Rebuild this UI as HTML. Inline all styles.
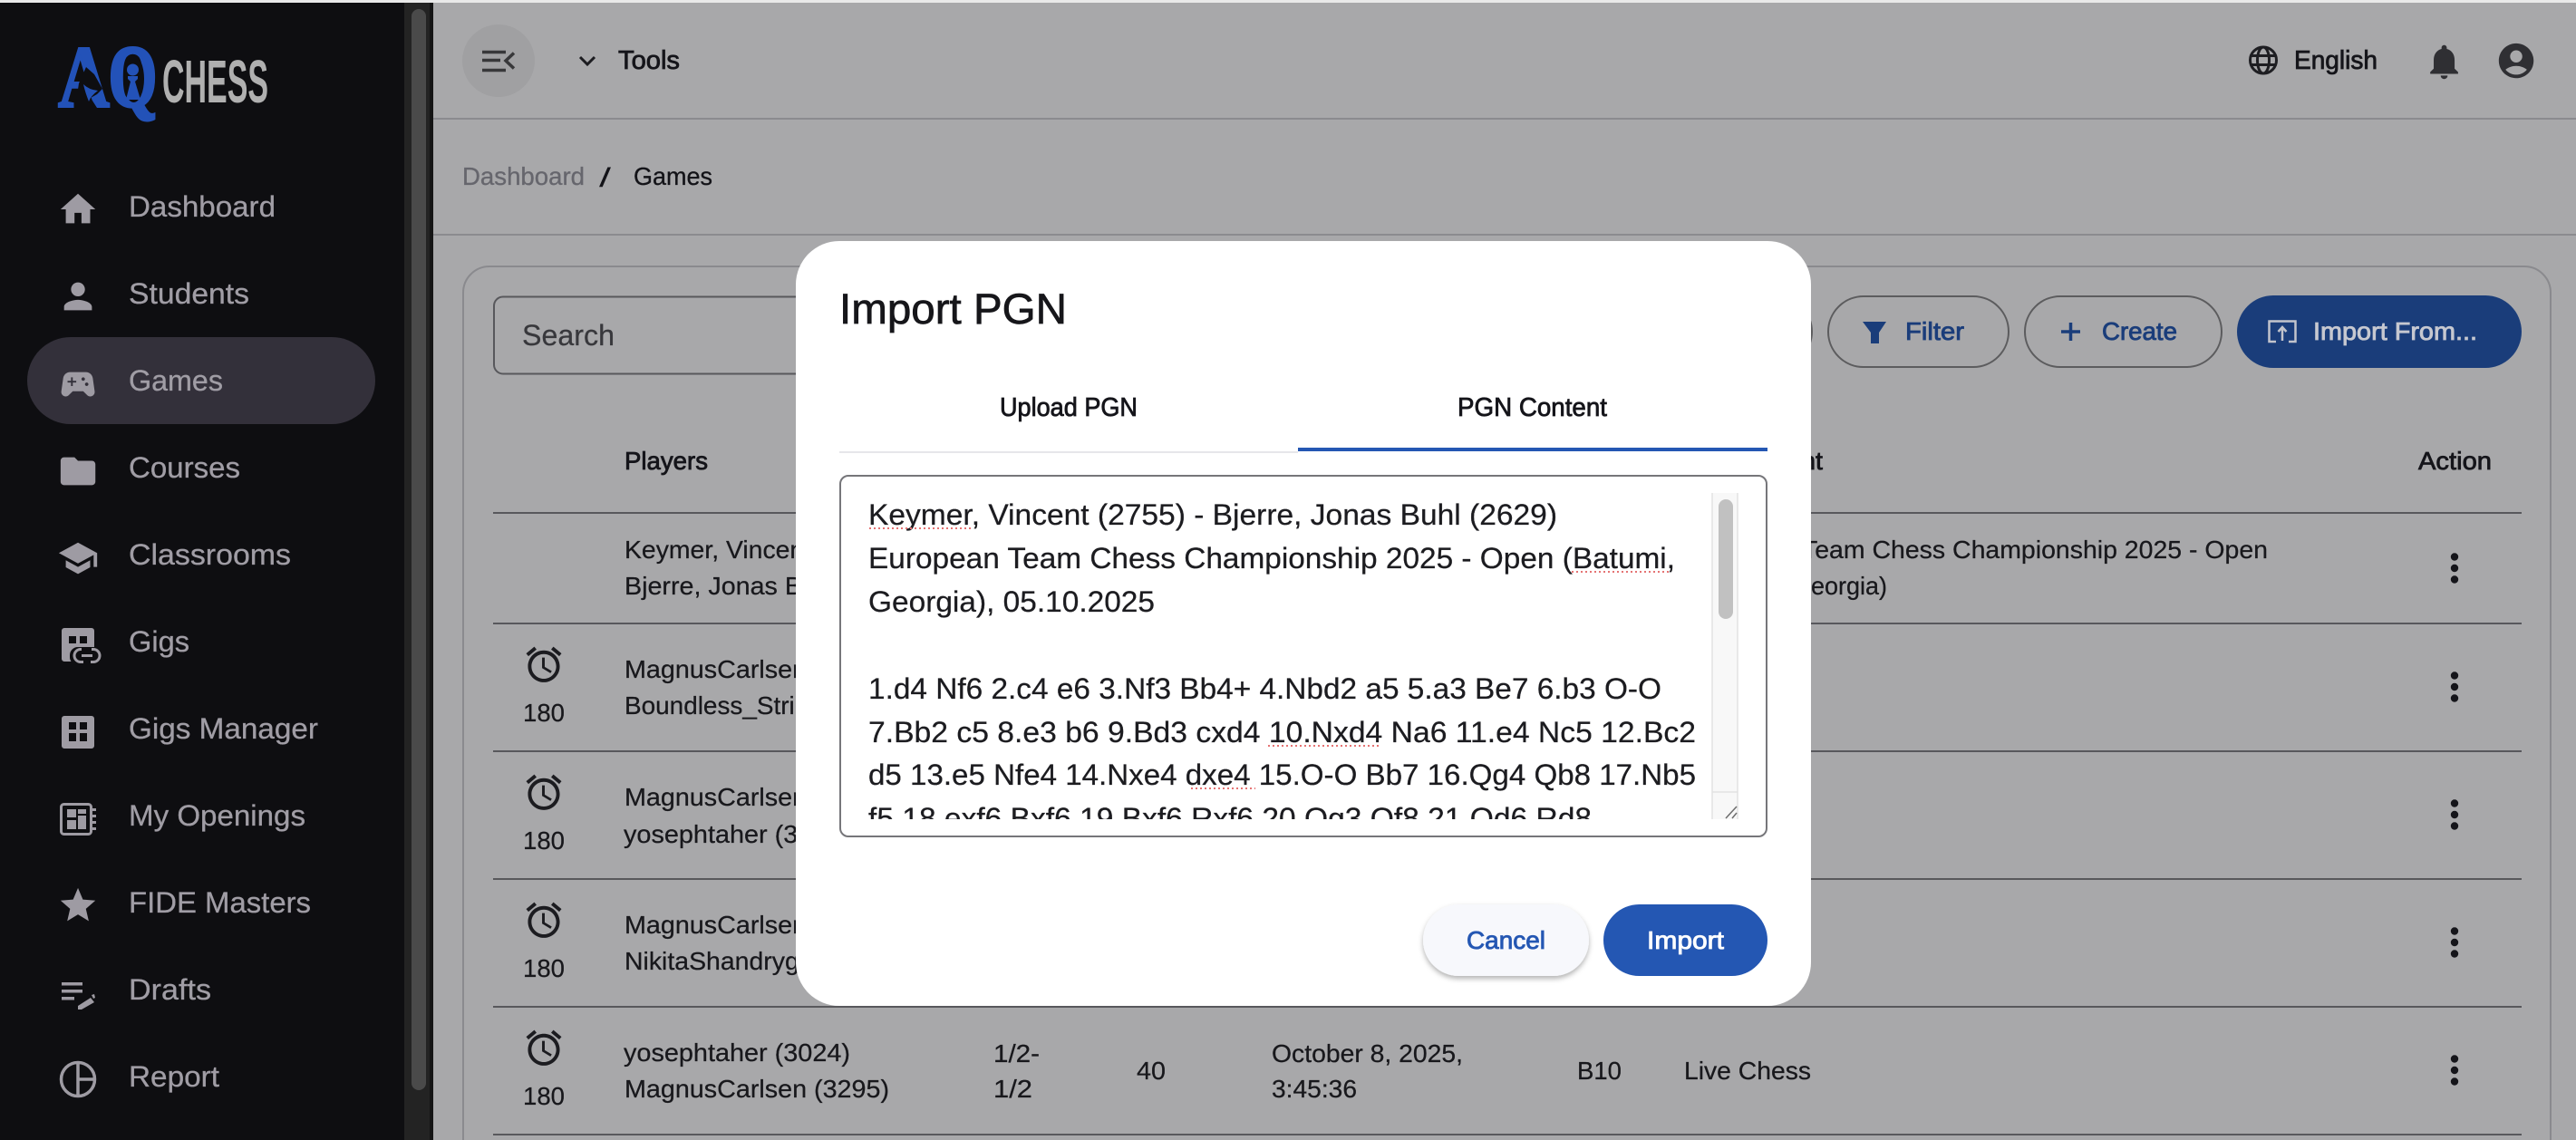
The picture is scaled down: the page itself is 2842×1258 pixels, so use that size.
<!DOCTYPE html>
<html lang="en"><head><meta charset="utf-8"><title>Import PGN</title>
<style>
html,body{margin:0;padding:0;width:2842px;height:1258px;overflow:hidden;background:#a8a8aa}
svg{display:block;position:absolute;left:0;top:0}
text{font-family:"Liberation Sans",sans-serif;white-space:pre}
.n{font-size:32px;fill:#a09da5;stroke:#a09da5;stroke-width:.3px}
.ic{fill:#9e9ba3}
.d{font-size:28px;fill:#18181c;stroke:#18181c;stroke-width:.25px}
.m{font-size:28px;fill:#15151a;stroke:#15151a;stroke-width:.8px}
.b{font-size:28px;fill:#1a3d7a;stroke:#1a3d7a;stroke-width:.85px}
.t{font-size:32px;fill:#1c1c20;stroke:#1c1c20;stroke-width:.25px}
.sq{stroke:#e57373;stroke-width:2;stroke-dasharray:2 3;fill:none}
.ln{stroke:#58585c;stroke-width:2}
</style></head><body>
<svg width="2842" height="1258" viewBox="0 0 2842 1258" xmlns="http://www.w3.org/2000/svg">
<defs>
<filter id="sh" x="-20%" y="-20%" width="140%" height="150%"><feDropShadow dx="0" dy="3" stdDeviation="3" flood-color="#000" flood-opacity=".3"/></filter>
<clipPath id="ta"><rect x="930" y="544" width="956" height="360"/></clipPath>
<path id="al" d="M22 5.72l-4.6-3.86-1.29 1.53 4.6 3.86L22 5.72zM7.88 3.39 6.6 1.86 2 5.71l1.29 1.53 4.59-3.85zM12.5 8H11v6l4.75 2.85.75-1.23-4-2.37V8zM12 4c-4.97 0-9 4.03-9 9s4.03 9 9 9 9-4.03 9-9-4.03-9-9-9zm0 16c-3.87 0-7-3.13-7-7s3.13-7 7-7 7 3.13 7 7-3.13 7-7 7z"/>
<g id="dots"><circle cx="0" cy="-12.5" r="4.2"/><circle cx="0" cy="0" r="4.2"/><circle cx="0" cy="12.5" r="4.2"/></g>
</defs>

<!-- page background -->
<rect width="2842" height="1258" fill="#a8a8aa"/>
<rect width="2842" height="3" fill="#e9e9e9"/>

<!-- sidebar -->
<rect x="0" y="3" width="446" height="1255" fill="#0e0e11"/>
<rect x="446" y="3" width="28" height="1255" fill="#232323"/>
<rect x="474" y="3" width="4" height="1255" fill="#151515"/>
<rect x="454" y="10" width="16" height="1193" rx="8" fill="#4a4a4a"/>

<!-- logo -->
<text x="64" y="118" font-size="98" textLength="57" lengthAdjust="spacingAndGlyphs" style="font-family:'Liberation Serif',serif;font-weight:bold;stroke:#2352b8;stroke-width:2.500px" fill="#2352b8">A</text>
<text x="120" y="117" font-size="96" textLength="53" lengthAdjust="spacingAndGlyphs" style="font-family:'Liberation Serif',serif;font-weight:bold;stroke:#2352b8;stroke-width:4px" fill="#2352b8">Q</text>
<path d="M95 74L87 92L83 119H107L100 108L107 104L113 98L104 82Z" fill="#0e0e11"/>
<path d="M92 93Q98 99 108 100Q100 106 98 112Q94 102 92 93Z" fill="#2352b8"/>
<ellipse cx="147.500" cy="87" rx="11.500" ry="26" fill="#0e0e11"/>
<circle cx="146.500" cy="77" r="6.500" fill="#2352b8"/>
<path d="M141 84H152V87L149 90L155 110H139L144 90L141 87Z" fill="#2352b8"/>
<text x="179" y="113" font-size="67" font-weight="bold" textLength="117" lengthAdjust="spacingAndGlyphs" fill="#b0b0b0">CHESS</text>

<!-- nav -->
<rect x="30" y="372" width="384" height="96" rx="48" fill="#33303a"/>
<text class="n" x="142" y="239" textLength="162" lengthAdjust="spacingAndGlyphs">Dashboard</text>
<text class="n" x="142" y="335" textLength="133" lengthAdjust="spacingAndGlyphs">Students</text>
<text class="n" x="142" y="431" textLength="104" lengthAdjust="spacingAndGlyphs">Games</text>
<text class="n" x="142" y="527" textLength="123" lengthAdjust="spacingAndGlyphs">Courses</text>
<text class="n" x="142" y="623" textLength="179" lengthAdjust="spacingAndGlyphs">Classrooms</text>
<text class="n" x="142" y="719" textLength="67" lengthAdjust="spacingAndGlyphs">Gigs</text>
<text class="n" x="142" y="815" textLength="209" lengthAdjust="spacingAndGlyphs">Gigs Manager</text>
<text class="n" x="142" y="911" textLength="195" lengthAdjust="spacingAndGlyphs">My Openings</text>
<text class="n" x="142" y="1007" textLength="201" lengthAdjust="spacingAndGlyphs">FIDE Masters</text>
<text class="n" x="142" y="1103" textLength="91" lengthAdjust="spacingAndGlyphs">Drafts</text>
<text class="n" x="142" y="1199" textLength="100" lengthAdjust="spacingAndGlyphs">Report</text>
<g class="ic">
<path transform="translate(63 208) scale(1.92)" d="M10 20v-6h4v6h5v-8h3L12 3 2 12h3v8z"/>
<path transform="translate(63 304) scale(1.92)" d="M12 12c2.21 0 4-1.79 4-4s-1.79-4-4-4-4 1.79-4 4 1.79 4 4 4zm0 2c-2.67 0-8 1.34-8 4v2h16v-2c0-2.66-5.33-4-8-4z"/>
<path transform="translate(63 401) scale(1.92)" d="M21.58 16.09l-1.09-7.66C20.21 6.46 18.52 5 16.53 5H7.47C5.48 5 3.79 6.46 3.51 8.43l-1.09 7.66C2.2 17.63 3.39 19 4.94 19c.68 0 1.32-.27 1.8-.75L9 16h6l2.25 2.25c.48.48 1.13.75 1.8.75 1.56 0 2.75-1.37 2.53-2.91zM11 11H9v2H8v-2H6v-1h2V8h1v2h2v1zm4-1c-.55 0-1-.45-1-1s.45-1 1-1 1 .45 1 1-.45 1-1 1zm2 3c-.55 0-1-.45-1-1s.45-1 1-1 1 .45 1 1-.45 1-1 1z"/>
<path transform="translate(63 497) scale(1.92)" d="M10 4H4c-1.1 0-1.99.9-1.99 2L2 18c0 1.1.9 2 2 2h16c1.1 0 2-.9 2-2V8c0-1.1-.9-2-2-2h-8l-2-2z"/>
<path transform="translate(63 593) scale(1.92)" d="M5 13.18v4L12 21l7-3.82v-4L12 17l-7-3.82zM12 3 1 9l11 6 9-4.91V17h2V9L12 3z"/>
<!-- gigs -->
<path fill-rule="evenodd" d="M71 693H101a3 3 0 0 1 3 3V730H71a3 3 0 0 1-3-3V696a3 3 0 0 1 3-3ZM76 702V710H84V702ZM88 702V710H96V702Z"/>
<rect x="77" y="714" width="35" height="20" rx="9" fill="#0e0e11"/>
<path d="M90 716.500H89a7 7 0 0 0 0 14H92M101 716.500H103a7 7 0 0 1 0 14H100M90 723.500H102" fill="none" stroke="#9e9ba3" stroke-width="3"/>
<!-- gigs manager -->
<path fill-rule="evenodd" d="M71 790H101a3 3 0 0 1 3 3V823a3 3 0 0 1-3 3H71a3 3 0 0 1-3-3V793a3 3 0 0 1 3-3ZM76 797V805H84V797ZM88 797V805H96V797ZM76 809V818H84V809ZM88 809V818H96V809Z"/>
<!-- my openings -->
<rect x="67.500" y="887.500" width="33" height="33" rx="3" fill="none" stroke="#9e9ba3" stroke-width="3"/>
<rect x="74" y="893" width="10" height="9"/><rect x="74" y="905" width="10" height="10"/><rect x="86" y="893" width="9" height="5"/><rect x="86" y="900" width="9" height="15"/>
<rect x="102" y="892" width="4" height="3"/><rect x="102" y="899" width="4" height="3"/><rect x="102" y="906" width="4" height="3"/><rect x="102" y="913" width="4" height="3"/>
<path transform="translate(63 976) scale(1.92)" d="M12 17.27 18.18 21l-1.64-7.03L22 9.24l-7.19-.61L12 2 9.19 8.63 2 9.24l5.46 4.73L5.82 21z"/>
<!-- drafts -->
<rect x="68" y="1084" width="23" height="3.500"/><rect x="68" y="1092" width="23" height="3.500"/><rect x="68" y="1100" width="14" height="3.500"/>
<path d="M86 1110L100 1101L104 1106L90 1114H86Z"/><path d="M101 1098L104 1097L105 1101L103 1102Z"/>
<!-- report -->
<circle cx="86" cy="1191" r="18.500" fill="none" stroke="#9e9ba3" stroke-width="3.500"/>
<path d="M86 1172V1210M86 1191H105" fill="none" stroke="#9e9ba3" stroke-width="3.500"/>
</g>

<!-- header -->
<rect x="478" y="130" width="2364" height="2" fill="#8b8b8f"/>
<rect x="478" y="258" width="2364" height="2" fill="#8b8b8f"/>
<circle cx="550" cy="67" r="40" fill="#a0a0a2"/>
<path d="M532 57.500H558M532 66.500H552M532 77.500H558" stroke="#38383a" stroke-width="3.500" fill="none"/>
<path d="M567 58.500L558 67L567 75.500" stroke="#38383a" stroke-width="3.500" fill="none"/>
<path d="M640 63L648 71L656 63" stroke="#1c1c20" stroke-width="3" fill="none"/>
<text class="m" x="682" y="76" style="font-size:29px" textLength="68" lengthAdjust="spacingAndGlyphs">Tools</text>
<g fill="none" stroke="#1e1e22" stroke-width="3"><circle cx="2497" cy="66.500" r="14.500"/><ellipse cx="2497" cy="66.500" rx="6.500" ry="14.500"/><path d="M2483 61.500H2511M2483 71.500H2511"/></g>
<text class="m" x="2531" y="76" style="font-size:29px" textLength="92" lengthAdjust="spacingAndGlyphs">English</text>
<path fill="#2f2f33" transform="translate(2673.500 45) scale(1.92)" d="M12 22c1.1 0 2-.9 2-2h-4c0 1.100.9 2 2 2zm6-6v-5c0-3.070-1.630-5.640-4.500-6.320V4c0-.83-.67-1.500-1.500-1.500s-1.500.67-1.500 1.500v.68C7.640 5.360 6 7.920 6 11v5l-2 2v1h16v-1l-2-2z"/>
<path fill="#2f2f33" fill-rule="evenodd" transform="translate(2753 44) scale(1.92)" d="M12 2C6.480 2 2 6.480 2 12s4.480 10 10 10 10-4.480 10-10S17.520 2 12 2zm0 4c1.930 0 3.500 1.570 3.500 3.500S13.930 13 12 13s-3.500-1.570-3.500-3.500S10.070 6 12 6zm0 14c-2.030 0-4.430-.82-6.140-2.880C7.550 15.800 9.680 15 12 15s4.450.8 6.140 2.120C16.430 19.180 14.030 20 12 20z"/>

<!-- breadcrumb -->
<text x="510" y="204" style="font-size:28px;stroke:#66666d;stroke-width:.3px" fill="#66666d" textLength="135" lengthAdjust="spacingAndGlyphs">Dashboard</text>
<text x="661" y="206" style="font-size:30px" fill="#131318" textLength="13" lengthAdjust="spacingAndGlyphs">/</text>
<text x="699" y="204" style="font-size:28px;stroke:#131318;stroke-width:.3px" fill="#131318" textLength="87" lengthAdjust="spacingAndGlyphs">Games</text>

<!-- card -->
<path d="M511 1258V323a29 29 0 0 1 29-29H2785a29 29 0 0 1 29 29V1258" fill="none" stroke="#8a8a8e" stroke-width="2"/>
<rect x="545" y="327.500" width="1000" height="85" rx="10" fill="none" stroke="#58585c" stroke-width="2"/>
<text x="576" y="381" style="font-size:32px;stroke:#38383c;stroke-width:.25px" fill="#38383c" textLength="102" lengthAdjust="spacingAndGlyphs">Search</text>

<!-- toolbar -->
<rect x="1800" y="327" width="199" height="78" rx="39" fill="none" stroke="#5c5c5e" stroke-width="2"/>
<rect x="2017" y="327" width="199" height="78" rx="39" fill="none" stroke="#5c5c5e" stroke-width="2"/>
<rect x="2234" y="327" width="217" height="78" rx="39" fill="none" stroke="#5c5c5e" stroke-width="2"/>
<rect x="2468" y="326" width="314" height="80" rx="40" fill="#1a3d7a"/>
<path d="M2055 355H2081L2073 367V379H2064V367Z" fill="#1a3d7a"/>
<text class="b" x="2102" y="375" textLength="65" lengthAdjust="spacingAndGlyphs">Filter</text>
<path d="M2284.500 356V376M2274 366H2295" stroke="#1a3d7a" stroke-width="3.500" fill="none"/>
<text class="b" x="2319" y="375" textLength="83" lengthAdjust="spacingAndGlyphs">Create</text>
<path d="M2511 377H2503.500V354.500H2532.500V377H2525M2518 376V362M2513.500 366L2518 361L2522.500 366" stroke="#c2c4cc" stroke-width="2.500" fill="none"/>
<text x="2552" y="375" style="font-size:28px;stroke:#c6c8d0;stroke-width:.85px" fill="#c6c8d0" textLength="181" lengthAdjust="spacingAndGlyphs">Import From...</text>

<!-- table -->
<text class="m" x="689" y="518" textLength="92" lengthAdjust="spacingAndGlyphs">Players</text>
<text class="m" x="1860" y="518" textLength="151" lengthAdjust="spacingAndGlyphs">Tournament</text>
<text class="m" x="2668" y="518" textLength="81" lengthAdjust="spacingAndGlyphs">Action</text>
<g class="ln">
<line x1="544" x2="2782" y1="566" y2="566"/><line x1="544" x2="2782" y1="688" y2="688"/><line x1="544" x2="2782" y1="829" y2="829"/><line x1="544" x2="2782" y1="970" y2="970"/><line x1="544" x2="2782" y1="1111" y2="1111"/><line x1="544" x2="2782" y1="1252" y2="1252"/>
</g>
<text class="d" x="689" y="616" textLength="296" lengthAdjust="spacingAndGlyphs">Keymer, Vincent (2755)</text>
<text class="d" x="689" y="656" textLength="325" lengthAdjust="spacingAndGlyphs">Bjerre, Jonas Buhl (2629)</text>
<text class="d" x="689" y="748" textLength="292" lengthAdjust="spacingAndGlyphs">MagnusCarlsen (3295)</text>
<text class="d" x="689" y="788" textLength="315" lengthAdjust="spacingAndGlyphs">Boundless_Striker (3010)</text>
<text class="d" x="689" y="889" textLength="292" lengthAdjust="spacingAndGlyphs">MagnusCarlsen (3295)</text>
<text class="d" x="688" y="930" textLength="250" lengthAdjust="spacingAndGlyphs">yosephtaher (3024)</text>
<text class="d" x="689" y="1030" textLength="292" lengthAdjust="spacingAndGlyphs">MagnusCarlsen (3295)</text>
<text class="d" x="689" y="1070" textLength="305" lengthAdjust="spacingAndGlyphs">NikitaShandrygin (2900)</text>
<text class="d" x="688" y="1171" textLength="250" lengthAdjust="spacingAndGlyphs">yosephtaher (3024)</text>
<text class="d" x="689" y="1211" textLength="292" lengthAdjust="spacingAndGlyphs">MagnusCarlsen (3295)</text>

<g fill="#1c1c20">
<use href="#al" transform="translate(576.600 710) scale(1.95)"/>
<use href="#al" transform="translate(576.600 851) scale(1.95)"/>
<use href="#al" transform="translate(576.600 992) scale(1.95)"/>
<use href="#al" transform="translate(576.600 1133) scale(1.95)"/>
</g>
<text class="d" x="577" y="796" textLength="46" lengthAdjust="spacingAndGlyphs">180</text>
<text class="d" x="577" y="937" textLength="46" lengthAdjust="spacingAndGlyphs">180</text>
<text class="d" x="577" y="1078" textLength="46" lengthAdjust="spacingAndGlyphs">180</text>
<text class="d" x="577" y="1219" textLength="46" lengthAdjust="spacingAndGlyphs">180</text>

<text class="d" x="1096" y="1172" textLength="51" lengthAdjust="spacingAndGlyphs">1/2-</text>
<text class="d" x="1096" y="1211" textLength="43" lengthAdjust="spacingAndGlyphs">1/2</text>
<text class="d" x="1254" y="1191" textLength="32" lengthAdjust="spacingAndGlyphs">40</text>
<text class="d" x="1403" y="1172" textLength="211" lengthAdjust="spacingAndGlyphs">October 8, 2025,</text>
<text class="d" x="1403" y="1211" textLength="94" lengthAdjust="spacingAndGlyphs">3:45:36</text>
<text class="d" x="1740" y="1191" textLength="49" lengthAdjust="spacingAndGlyphs">B10</text>
<text class="d" x="1858" y="1191" textLength="140" lengthAdjust="spacingAndGlyphs">Live Chess</text>
<text class="d" x="1988" y="616" textLength="514" lengthAdjust="spacingAndGlyphs">Team Chess Championship 2025 - Open</text>
<text class="d" x="1977" y="656" textLength="105" lengthAdjust="spacingAndGlyphs">Georgia)</text>
<g fill="#15151a">
<use href="#dots" x="2708" y="627"/><use href="#dots" x="2708" y="758"/><use href="#dots" x="2708" y="899"/><use href="#dots" x="2708" y="1040"/><use href="#dots" x="2708" y="1181"/>
</g>

<!-- modal -->
<rect x="878" y="266" width="1120" height="844" rx="48" fill="#ffffff"/>
<text x="926" y="357" style="font-size:47px;stroke:#16161a;stroke-width:.7px" fill="#16161a" textLength="251" lengthAdjust="spacingAndGlyphs">Import PGN</text>
<text class="m" x="1103" y="459" style="font-size:29px" textLength="152" lengthAdjust="spacingAndGlyphs">Upload PGN</text>
<text class="m" x="1608" y="459" style="font-size:29px" textLength="165" lengthAdjust="spacingAndGlyphs">PGN Content</text>
<rect x="926" y="498" width="506" height="2" fill="#e6e6ea"/>
<rect x="1432" y="494" width="518" height="4" fill="#2457b3"/>

<rect x="927" y="525" width="1022" height="398" rx="9" fill="#fff" stroke="#76767a" stroke-width="2"/>
<g clip-path="url(#ta)">
<text class="t" x="958" y="579" textLength="760" lengthAdjust="spacingAndGlyphs">Keymer, Vincent (2755) - Bjerre, Jonas Buhl (2629)</text>
<text class="t" x="958" y="627" textLength="890" lengthAdjust="spacingAndGlyphs">European Team Chess Championship 2025 - Open (Batumi,</text>
<text class="t" x="958" y="675" textLength="316" lengthAdjust="spacingAndGlyphs">Georgia), 05.10.2025</text>
<text class="t" x="958" y="771" textLength="875" lengthAdjust="spacingAndGlyphs">1.d4 Nf6 2.c4 e6 3.Nf3 Bb4+ 4.Nbd2 a5 5.a3 Be7 6.b3 O-O</text>
<text class="t" x="958" y="819" textLength="913" lengthAdjust="spacingAndGlyphs">7.Bb2 c5 8.e3 b6 9.Bd3 cxd4 10.Nxd4 Na6 11.e4 Nc5 12.Bc2</text>
<text class="t" x="958" y="866" textLength="913" lengthAdjust="spacingAndGlyphs">d5 13.e5 Nfe4 14.Nxe4 dxe4 15.O-O Bb7 16.Qg4 Qb8 17.Nb5</text>
<text class="t" x="958" y="914" textLength="798" lengthAdjust="spacingAndGlyphs">f5 18.exf6 Bxf6 19.Bxf6 Rxf6 20.Qg3 Qf8 21.Qd6 Rd8</text>
</g>
<g class="sq">
<line x1="959" x2="1071" y1="583" y2="583"/><line x1="1734" x2="1843" y1="631" y2="631"/><line x1="1399" x2="1523" y1="823" y2="823"/><line x1="1314" x2="1385" y1="870" y2="870"/>
</g>
<rect x="1889" y="544" width="28" height="360" fill="#f8f8f8"/>
<path d="M1889 544V904M1917 544V904M1889 874H1917" stroke="#e2e2e2" stroke-width="1.500" fill="none"/>
<rect x="1896" y="551" width="16" height="132" rx="8" fill="#c1c1c1"/>
<path d="M1904 903L1916 890M1911 903L1916 897" stroke="#6e6e6e" stroke-width="1.500" fill="none"/>

<rect x="1570" y="998" width="183" height="79" rx="39.500" fill="#f7f8fc" filter="url(#sh)"/>
<text class="b" x="1618" y="1047" style="fill:#2457b3;stroke:#2457b3" textLength="87" lengthAdjust="spacingAndGlyphs">Cancel</text>
<rect x="1769" y="998" width="181" height="79" rx="39.500" fill="#2457b3"/>
<text x="1817" y="1047" style="font-size:28px;stroke:#fff;stroke-width:.85px" fill="#fff" textLength="85" lengthAdjust="spacingAndGlyphs">Import</text>
</svg>
</body></html>
